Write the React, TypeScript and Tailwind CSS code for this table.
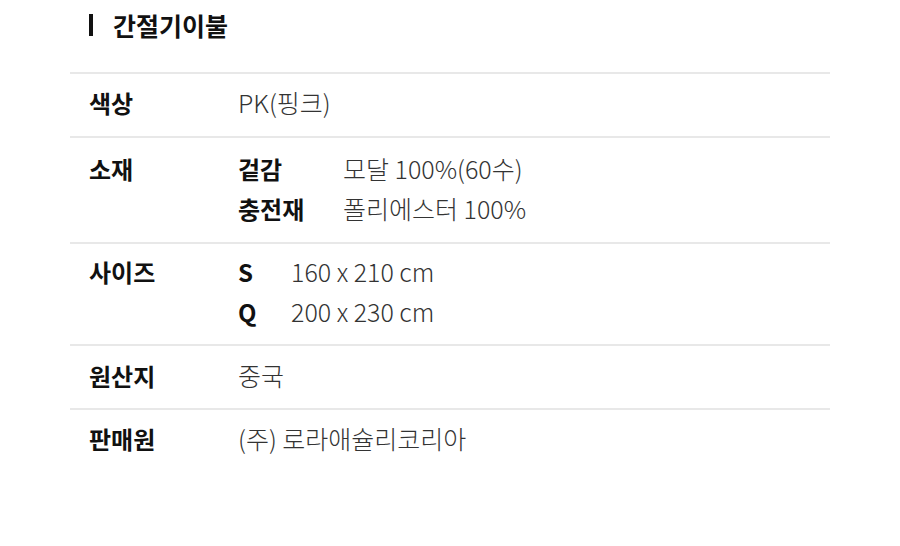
import React from 'react';

const FONT = "font-['Noto_Sans_CJK_KR','Noto_Sans',sans-serif]";
const LIGHT = "font-['Noto_Sans_CJK_KR_Light','Noto_Sans_CJK_KR','Noto_Sans',sans-serif] font-light";

type Row = {
  label: string;
  pad: string;
  content: React.ReactNode;
};

const SubRow: React.FC<{ k: string; v: string; w: string }> = ({ k, v, w }) => (
  <div className="flex h-10 items-center">
    <span className={`${w} text-[24px] font-bold text-[#111]`}>{k}</span>
    <span className={`${LIGHT} text-[#333]`}>{v}</span>
  </div>
);

const rows: Row[] = [
  {
    label: '색상',
    pad: 'pt-[9px] pb-[13px]',
    content: <div className={`flex h-10 items-center ${LIGHT} text-[#333]`}>PK(핑크)</div>,
  },
  {
    label: '소재',
    pad: 'pt-[11px] pb-[13px]',
    content: (
      <>
        <SubRow k="겉감" v="모달 100%(60수)" w="w-[105px]" />
        <SubRow k="충전재" v="폴리에스터 100%" w="w-[105px]" />
      </>
    ),
  },
  {
    label: '사이즈',
    pad: 'pt-2 pb-3',
    content: (
      <>
        <SubRow k="S" v="160 x 210 cm" w="w-[53px]" />
        <SubRow k="Q" v="200 x 230 cm" w="w-[53px]" />
      </>
    ),
  },
  {
    label: '원산지',
    pad: 'pt-[10px] pb-3',
    content: <div className={`flex h-10 items-center ${LIGHT} text-[#333]`}>중국</div>,
  },
  {
    label: '판매원',
    pad: 'pt-[9px] pb-3',
    content: <div className={`flex h-10 items-center ${LIGHT} text-[#333]`}>(주) 로라애슐리코리아</div>,
  },
];

export default function App() {
  return (
    <div className={`${FONT} min-h-[546px] w-[900px] bg-white`}>
      {/* Title */}
      <div className="flex items-center pl-[89px] pt-[13px]">
        <div className="h-[22px] w-1 bg-[#111]" />
        <h2 className="ml-5 text-[25px] font-bold leading-6 text-[#111]">간절기이불</h2>
      </div>

      {/* Spec table */}
      <div className="ml-[70px] mt-[35px] w-[760px]">
        {rows.map((r, i) => (
          <div
            key={r.label}
            className={`flex text-[25px] ${r.pad} ${i === 0 ? 'border-t-2' : ''} ${
              i < rows.length - 1 ? 'border-b-2' : ''
            } border-[#e8e8e8]`}
          >
            <div className="flex h-10 w-[168px] shrink-0 items-center pl-[19px] text-[24px] font-bold text-[#111]">
              {r.label}
            </div>
            <div className="flex flex-col">{r.content}</div>
          </div>
        ))}
      </div>
    </div>
  );
}
